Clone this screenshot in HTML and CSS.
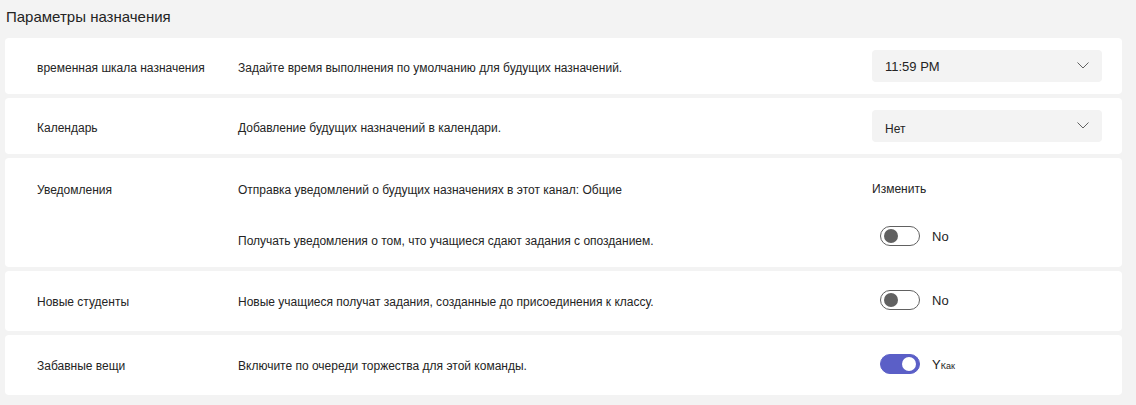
FILE: index.html
```html
<!DOCTYPE html>
<html lang="ru">
<head>
  <meta charset="UTF-8">
  <meta name="viewport" content="width=device-width, initial-scale=1.0">
  <title>Параметры назначения</title>
  <link rel="stylesheet" href="styles.css">
</head>
<body>
  <h1 class="page-title">Параметры назначения</h1>

  <div class="card">
    <div class="label">временная шкала назначения</div>
    <div class="desc">Задайте время выполнения по умолчанию для будущих назначений.</div>
    <div class="control">
      <button class="dropdown">
        <span>11:59 PM</span>
        <svg width="12" height="7" viewBox="0 0 12 7"><path d="M0.5 0.5 L6 6 L11.5 0.5" fill="none" stroke="#616161" stroke-width="1"/></svg>
      </button>
    </div>
  </div>

  <div class="card">
    <div class="label">Календарь</div>
    <div class="desc">Добавление будущих назначений в календари.</div>
    <div class="control">
      <button class="dropdown">
        <span class="nudge">Нет</span>
        <svg width="12" height="7" viewBox="0 0 12 7"><path d="M0.5 0.5 L6 6 L11.5 0.5" fill="none" stroke="#616161" stroke-width="1"/></svg>
      </button>
    </div>
  </div>

  <div class="card card-tall">
    <div class="label">Уведомления</div>
    <div class="desc">Отправка уведомлений о будущих назначениях в этот канал: Общие</div>
    <div class="control"><span class="link">Изменить</span></div>
    <div class="label"></div>
    <div class="desc low">Получать уведомления о том, что учащиеся сдают задания с опозданием.</div>
    <div class="control">
      <span class="toggle"><span class="knob"></span></span>
      <span class="toggle-text">No</span>
    </div>
  </div>

  <div class="card card-toggle">
    <div class="label">Новые студенты</div>
    <div class="desc">Новые учащиеся получат задания, созданные до присоединения к классу.</div>
    <div class="control">
      <span class="toggle"><span class="knob"></span></span>
      <span class="toggle-text">No</span>
    </div>
  </div>

  <div class="card card-toggle">
    <div class="label">Забавные вещи</div>
    <div class="desc">Включите по очереди торжества для этой команды.</div>
    <div class="control">
      <span class="toggle on"><span class="knob"></span></span>
      <span class="toggle-text">Y<small>Как</small></span>
    </div>
  </div>
</body>
</html>
```

FILE: styles.css
```css
body {
  margin: 0;
  padding: 0 14px 0 5px;
  background: #f3f3f3;
  font-family: "Liberation Sans", Arial, sans-serif;
  font-size: 12px;
  color: #242424;
}
.page-title {
  font-size: 15px;
  font-weight: normal;
  margin: 0;
  padding: 8px 0 12px 1px;
  line-height: 18px;
}
.card {
  background: #fff;
  border-radius: 4px;
  margin-bottom: 4px;
  display: grid;
  grid-template-columns: 201px 1fr 250px;
  align-items: center;
  padding: 12px 0 12px 32px;
  min-height: 32px;
}
.card-tall {
  padding: 18px 0 19px 32px;
  grid-template-rows: 24px 24px;
  row-gap: 24px;
}
.card-toggle { padding: 19px 0 21px 32px; min-height: 20px; }
.label { padding-top: 4px; }
.desc { padding-top: 4px; }
.desc.low { padding-top: 10px; }
.control {
  display: flex;
  align-items: center;
  padding-right: 20px;
}
.dropdown {
  width: 230px;
  height: 32px;
  border: none;
  border-radius: 4px;
  background: #f3f3f3;
  display: flex;
  align-items: center;
  justify-content: space-between;
  padding: 0 13px 0 13px;
  font-family: inherit;
  font-size: 13px;
  color: #242424;
}
.dropdown svg { margin-bottom: 2px; }
.nudge { font-size: 12px; padding-top: 6px; }
.link { padding-top: 1px; }
.toggle {
  box-sizing: border-box;
  width: 40px;
  height: 20px;
  border: 1px solid #616161;
  border-radius: 10px;
  margin-left: 8px;
  display: flex;
  align-items: center;
  padding: 0 3px;
}
.knob {
  width: 14px;
  height: 14px;
  border-radius: 50%;
  background: #616161;
}
.toggle.on {
  background: #5b5fc7;
  border-color: #5b5fc7;
  justify-content: flex-end;
}
.toggle.on .knob { background: #fff; }
.toggle-text { margin-left: 12px; font-size: 13px; }
.toggle-text small { font-size: 9px; }
```
